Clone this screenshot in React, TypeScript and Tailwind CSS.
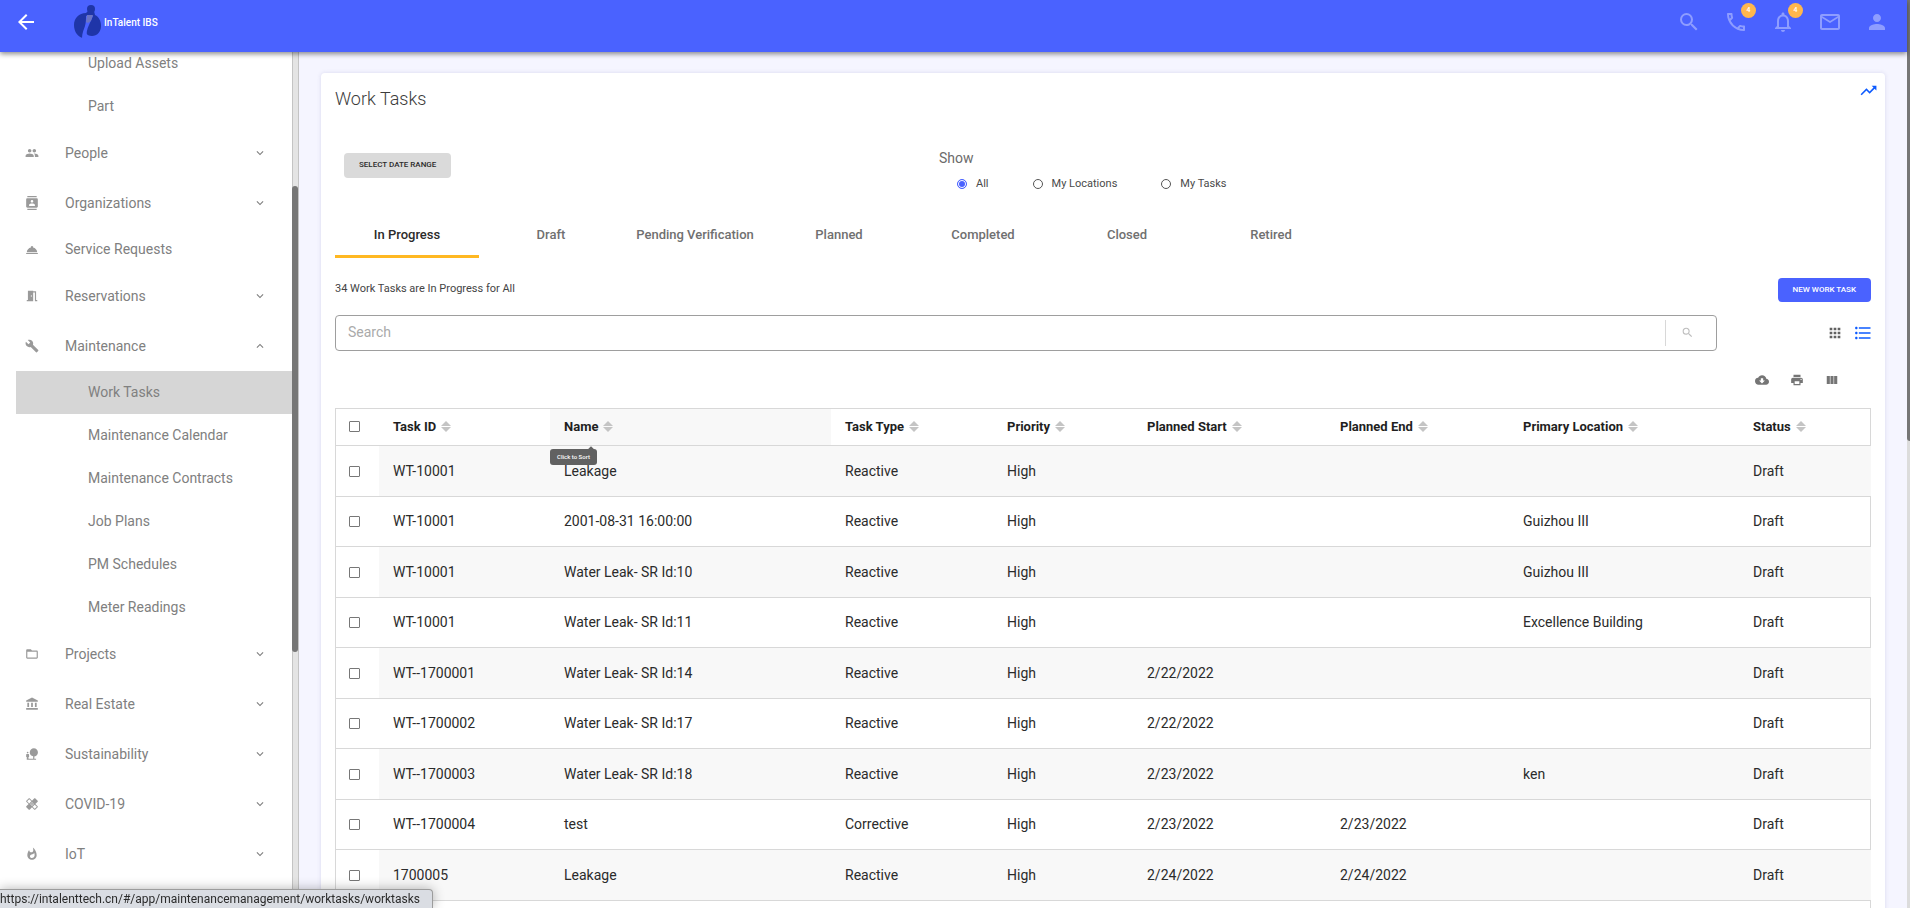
import React from "react";
import clsx from "clsx";
import type { IconType } from "react-icons";
import {
  MdAccountBalance,
  MdApps,
  MdArrowBack,
  MdBuild,
  MdCloudDownload,
  MdContacts,
  MdExpandLess,
  MdExpandMore,
  MdFolderOpen,
  MdFormatListBulleted,
  MdHealing,
  MdMailOutline,
  MdMeetingRoom,
  MdNaturePeople,
  MdNotificationsNone,
  MdOutlinePhone,
  MdPeople,
  MdPerson,
  MdPrint,
  MdRoomService,
  MdSearch,
  MdTrendingUp,
  MdViewColumn,
  MdWhatshot,
} from "react-icons/md";

type NavItem = {
  label: string;
  icon?: IconType;
  expandable?: boolean;
  open?: boolean;
  active?: boolean;
};

const navItems: NavItem[] = [
  { label: "Upload Assets" },
  { label: "Part" },
  { label: "People", icon: MdPeople, expandable: true },
  { label: "Organizations", icon: MdContacts, expandable: true },
  { label: "Service Requests", icon: MdRoomService },
  { label: "Reservations", icon: MdMeetingRoom, expandable: true },
  { label: "Maintenance", icon: MdBuild, expandable: true, open: true },
  { label: "Work Tasks", active: true },
  { label: "Maintenance Calendar" },
  { label: "Maintenance Contracts" },
  { label: "Job Plans" },
  { label: "PM Schedules" },
  { label: "Meter Readings" },
  { label: "Projects", icon: MdFolderOpen, expandable: true },
  { label: "Real Estate", icon: MdAccountBalance, expandable: true },
  { label: "Sustainability", icon: MdNaturePeople, expandable: true },
  { label: "COVID-19", icon: MdHealing, expandable: true },
  { label: "IoT", icon: MdWhatshot, expandable: true },
];

const tabs = [
  "In Progress",
  "Draft",
  "Pending Verification",
  "Planned",
  "Completed",
  "Closed",
  "Retired",
];

const columns = [
  { label: "Task ID", width: "w-[171px]" },
  { label: "Name", width: "w-[281px]" },
  { label: "Task Type", width: "w-[162px]" },
  { label: "Priority", width: "w-[140px]" },
  { label: "Planned Start", width: "w-[193px]" },
  { label: "Planned End", width: "w-[183px]" },
  { label: "Primary Location", width: "w-[230px]" },
  { label: "Status", width: "w-[132px]" },
];

const rows = [
  ["WT-10001", "Leakage", "Reactive", "High", "", "", "", "Draft"],
  ["WT-10001", "2001-08-31 16:00:00", "Reactive", "High", "", "", "Guizhou III", "Draft"],
  ["WT-10001", "Water Leak- SR Id:10", "Reactive", "High", "", "", "Guizhou III", "Draft"],
  ["WT-10001", "Water Leak- SR Id:11", "Reactive", "High", "", "", "Excellence Building", "Draft"],
  ["WT--1700001", "Water Leak- SR Id:14", "Reactive", "High", "2/22/2022", "", "", "Draft"],
  ["WT--1700002", "Water Leak- SR Id:17", "Reactive", "High", "2/22/2022", "", "", "Draft"],
  ["WT--1700003", "Water Leak- SR Id:18", "Reactive", "High", "2/23/2022", "", "ken", "Draft"],
  ["WT--1700004", "test", "Corrective", "High", "2/23/2022", "2/23/2022", "", "Draft"],
  ["1700005", "Leakage", "Reactive", "High", "2/24/2022", "2/24/2022", "", "Draft"],
];

const Logo = () => (
  <svg width="28" height="34" viewBox="0 0 28 34" aria-hidden="true">
    <circle cx="17" cy="4" r="4" fill="#1f35a8" />
    <path d="M14 6h6l1 4c4 2 6 6 6 11 0 6-4 10-9 10-3 0-5-1-6-3l-3 5C4 32 0 27 0 20 0 13 5 8 12 8z" fill="#1f35a8" />
    <path d="M12 11l2-1 5 1-4 9c-2 4-3 8-2 13l-5 0c0-5 2-9 3-12 1-4 1-7 1-10z" fill="#4a62ff" />
    <path d="M13 10h6l-2 6-3 2-2-1z" fill="#6b74c4" />
  </svg>
);

const Header = () => {
  const actions = [
    { label: "Search", icon: MdSearch },
    { label: "Calls", icon: MdOutlinePhone, badge: 4 },
    { label: "Notifications", icon: MdNotificationsNone, badge: 4 },
    { label: "Mail", icon: MdMailOutline },
    { label: "Account", icon: MdPerson },
  ];
  return (
    <header className="relative z-10 flex h-[52px] shrink-0 items-start justify-between bg-[#4a62ff] pr-[18px] pl-3.5 shadow-[0_2px_5px_rgba(0,0,0,0.45)]">
      <div className="flex items-center pt-[5px]">
        <button aria-label="Back" className="text-white">
          <MdArrowBack size={24} />
        </button>
        <a href="#" className="ml-9 flex items-center gap-0.5 text-[10px] font-medium text-white">
          <Logo />
          InTalent IBS
        </a>
      </div>
      <div className="flex gap-[23px] pt-2.5">
        {actions.map(({ label, icon: Icon, badge }) => (
          <button key={label} aria-label={label} className="relative text-[#8e9dff]">
            <Icon size={24} />
            {badge && (
              <span className="absolute -top-[7px] left-[17px] flex size-[15px] items-center justify-center rounded-full bg-[#ffb74d] text-[7px] font-medium text-white">
                {badge}
              </span>
            )}
          </button>
        ))}
      </div>
    </header>
  );
};

const Sidebar = () => (
  <aside className="flex w-[299px] shrink-0 overflow-hidden bg-white">
    <nav className="-mt-2.5 flex-1 pl-4 text-[14px] text-[#808080]">
      <ul>
        {navItems.map(({ label, icon: Icon, expandable, open, active }) => (
          <li key={label}>
            <a
              href="#"
              className={clsx(
                "flex items-center pr-[25px]",
                expandable ? "h-[50px]" : "h-[43px]",
                Icon ? "pl-[9px]" : "pl-[72px]",
                active && "bg-[#d6d6d6]"
              )}
            >
              {Icon && <Icon size={14} className="mr-[26px] text-[#9a9a9a]" />}
              <span className="flex-1">{label}</span>
              {expandable && (open ? <MdExpandLess size={14} /> : <MdExpandMore size={14} />)}
            </a>
          </li>
        ))}
      </ul>
    </nav>
    <div className="w-[7px] border-x border-[#c4c4c4] bg-[#e4e4e4] pt-[134px]">
      <div className="-ml-px h-[466px] w-1.5 rounded-full bg-[#767676]" />
    </div>
  </aside>
);

const SortIcon = () => (
  <svg width="10" height="11" viewBox="0 0 10 11" fill="#c4c4c4" aria-hidden="true">
    <path d="M5 0l5 5H0z" />
    <path d="M0 6h10l-5 5z" />
  </svg>
);

const Checkbox = ({ label }: { label: string }) => (
  <input
    type="checkbox"
    aria-label={label}
    className="block size-[11px] appearance-none rounded-[1px] border border-[#777777] bg-white checked:bg-[#4a62ff]"
  />
);

const TaskTable = () => (
  <div className="mt-[21px] border border-[#d8d8d8] pb-12">
    <table className="w-full table-fixed border-collapse text-left text-[14px] text-[#2b2b2b]">
      <thead>
        <tr className="h-[37px] border-b border-[#d8d8d8] text-[#1f1f1f]">
          <th className="w-[43px] pl-[13px]">
            <Checkbox label="Select all" />
          </th>
          {columns.map(({ label, width }) => (
            <th
              key={label}
              className={clsx("relative pl-3.5 text-[13px] font-bold", width, label === "Name" && "bg-[#f8f8f8]")}
            >
              <button className="flex items-center gap-[5px]">
                {label}
                <SortIcon />
              </button>
              {label === "Name" && (
                <div
                  role="tooltip"
                  className="absolute top-10 left-0 flex h-4 w-[47px] items-center justify-center rounded-[3px] bg-[#616161] text-[6px] font-medium text-white"
                >
                  <span className="absolute -top-0.5 right-1 size-1 rotate-45 bg-[#616161]" />
                  Click to Sort
                </div>
              )}
            </th>
          ))}
        </tr>
      </thead>
      <tbody>
        {rows.map((row, i) => (
          <tr key={i} className="h-[50px] border-b border-[#d8d8d8] odd:h-[51px]">
            <td className="pl-[13px]">
              <Checkbox label={`Select ${row[0]}`} />
            </td>
            {row.map((cell, j) => (
              <td key={j} className={clsx("pl-3.5", i % 2 === 0 && "bg-[#f8f8f8]")}>
                {cell}
              </td>
            ))}
          </tr>
        ))}
      </tbody>
    </table>
  </div>
);

const ShowFilter = () => (
  <fieldset className="flex-1 text-[#4a4a4a]">
    <legend className="text-[14px] text-[#6b6b6b]">Show</legend>
    <div className="mt-[7px] flex gap-11 pl-[18px] text-[11px]">
      {["All", "My Locations", "My Tasks"].map((label, i) => (
        <label key={label} className="flex items-center gap-[9px]">
          <input
            type="radio"
            name="show"
            defaultChecked={i === 0}
            className="size-2.5 appearance-none rounded-full border border-[#555555] checked:border-[#4a62ff] checked:bg-[#4a62ff] checked:shadow-[inset_0_0_0_1px_white]"
          />
          {label}
        </label>
      ))}
    </div>
  </fieldset>
);

const WorkTasks = () => (
  <main className="min-w-0 flex-1 overflow-hidden bg-[#f5f5ff] pt-[21px] pr-[22px] pl-[22px]">
    <section className="rounded bg-white px-3.5 pb-6 shadow-[0_0_4px_rgba(60,60,140,0.15)]">
      <div className="flex items-start justify-between pt-2">
        <h1 className="pt-1 text-[18px] font-light text-[#3c3c3c]">Work Tasks</h1>
        <button aria-label="Trends" className="-mr-[7px] text-[#0d5bff]">
          <MdTrendingUp size={19} />
        </button>
      </div>
      <div className="mt-9 flex items-start">
        <div className="w-[604px] pt-0.5 pl-[9px]">
          <button className="h-[25px] rounded bg-[#dadada] px-[15px] text-[8px] font-medium text-[#2b2b2b]">
            SELECT DATE RANGE
          </button>
        </div>
        <ShowFilter />
      </div>
      <div role="tablist" className="mt-[23px] flex">
        {tabs.map((tab, i) => (
          <button
            key={tab}
            role="tab"
            aria-selected={i === 0}
            className={clsx(
              "h-[42px] w-36 border-b-3 text-[13px] font-medium",
              i === 0 ? "border-[#ffb822] font-bold text-[#2b2b2b]" : "border-transparent text-[#707070]"
            )}
          >
            {tab}
          </button>
        ))}
      </div>
      <div className="mt-5 flex items-center justify-between">
        <p className="text-[11px] text-[#444444]">34 Work Tasks are In Progress for All</p>
        <button className="h-6 rounded bg-[#4a62ff] px-[15px] text-[8px] font-medium text-white">
          NEW WORK TASK
        </button>
      </div>
      <div className="mt-[13px] flex items-center">
        <div className="flex h-9 flex-1 items-center rounded border border-[#9e9e9e]">
          <input
            type="text"
            aria-label="Search work tasks"
            placeholder="Search"
            className="min-w-0 flex-1 px-3 text-[14px] outline-none placeholder:text-[#aaaaaa]"
          />
          <button
            aria-label="Search"
            className="flex h-[26px] w-[51px] items-center justify-center border-l border-[#d8d8d8] pr-2 text-[#bdbdbd]"
          >
            <MdSearch size={13} />
          </button>
        </div>
        <div className="flex w-[154px] items-center justify-end gap-2.5">
          <button aria-label="Grid view" className="text-[#616161]">
            <MdApps size={16} />
          </button>
          <button aria-label="List view" className="-mr-0.5 text-[#0d5bff]">
            <MdFormatListBulleted size={20} />
          </button>
        </div>
      </div>
      <div className="mt-[22px] flex justify-end gap-[21px] pr-8 text-[#757575]">
        <button aria-label="Download">
          <MdCloudDownload size={14} />
        </button>
        <button aria-label="Print">
          <MdPrint size={14} />
        </button>
        <button aria-label="Choose columns">
          <MdViewColumn size={14} />
        </button>
      </div>
      <TaskTable />
    </section>
  </main>
);

export default function App() {
  return (
    <div className="flex h-screen overflow-hidden font-[Roboto,sans-serif]">
      <div className="flex min-w-0 flex-1 flex-col">
        <Header />
        <div className="flex min-h-0 flex-1">
          <Sidebar />
          <WorkTasks />
        </div>
      </div>
      <div className="w-[3px] bg-[#dcdcdc]">
        <div className="h-[441px] rounded-bl bg-[#767676]" />
      </div>
      <div className="fixed bottom-0 left-0 z-20 h-[19px] overflow-hidden rounded-tr border-t border-r border-[#9c9c9c] bg-[#dadde3] pr-3 text-[12px] leading-[18px] text-[#2b2b2b] shadow-[0_0_12px_rgba(0,0,0,0.3)]">
        https://intalenttech.cn/#/app/maintenancemanagement/worktasks/worktasks
      </div>
    </div>
  );
}
